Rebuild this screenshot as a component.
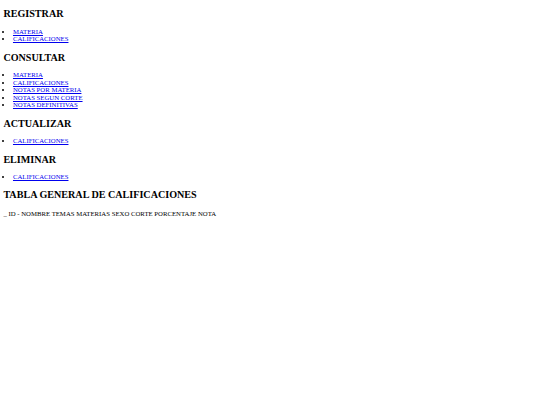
import React from "react";

const H = ({ children }: { children: React.ReactNode }) => (
  <h2 className="my-[8.4px] text-[10.125px] font-bold">{children}</h2>
);

const L = ({ items }: { items: string[] }) => (
  <ul className="mt-[6.75px] mb-[9px] list-disc pl-[9.6px] leading-[7.5px]">
    {items.map((t, i) => (
      <li key={i}>
        <a href="#" className="text-[#0000EE] underline">
          {t}
        </a>
      </li>
    ))}
  </ul>
);

export default function App() {
  return (
    <div className="mx-[3.375px] text-[6.75px] leading-[normal] text-black [font-family:'Liberation_Serif',serif]">
      <H>REGISTRAR</H>
      <L items={["MATERIA", "CALIFICACIONES"]} />
      <H>CONSULTAR</H>
      <L
        items={[
          "MATERIA",
          "CALIFICACIONES",
          "NOTAS POR MATERIA",
          "NOTAS SEGUN CORTE",
          "NOTAS DEFINITIVAS",
        ]}
      />
      <H>ACTUALIZAR</H>
      <L items={["CALIFICACIONES"]} />
      <H>ELIMINAR</H>
      <L items={["CALIFICACIONES"]} />
      <H>TABLA GENERAL DE CALIFICACIONES</H>
      <p className="mt-[9.4px]">_ ID - NOMBRE TEMAS MATERIAS SEXO CORTE PORCENTAJE NOTA</p>
    </div>
  );
}
